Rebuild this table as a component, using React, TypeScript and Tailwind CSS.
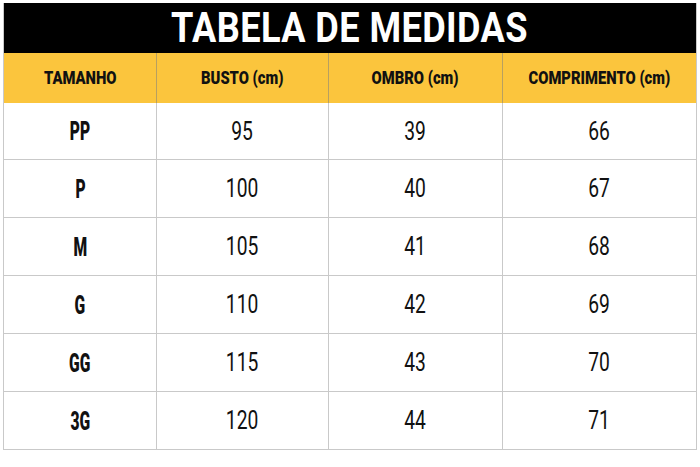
import React from "react";

const rows = [
  ["PP", "95", "39", "66"],
  ["P", "100", "40", "67"],
  ["M", "105", "41", "68"],
  ["G", "110", "42", "69"],
  ["GG", "115", "43", "70"],
  ["3G", "120", "44", "71"],
];

const headers = ["TAMANHO", "BUSTO (cm)", "OMBRO (cm)", "COMPRIMENTO (cm)"];

export default function App() {
  return (
    <div
      className="w-[700px] h-[467px] bg-white pt-[3px] pl-[3px]"
      style={{ fontFamily: "Roboto, 'DejaVu Sans', sans-serif" }}
    >
      <div className="w-[694px] border-x border-b border-[#c9c9c9]">
        <div className="h-[50px] bg-black flex items-center justify-center">
          <span className="inline-block text-white font-bold text-[42px] leading-none scale-x-[0.86] tracking-[0.5px]">
            TABELA DE MEDIDAS
          </span>
        </div>
        <div className="grid grid-cols-[152px_172px_174px_194px] h-[50px] bg-[#fbc53d]">
          {headers.map((h, i) => (
            <div
              key={h}
              className={`flex items-center justify-center ${i > 0 ? "border-l border-[#b8a060]" : ""}`}
            >
              <span className="inline-block font-black text-[18px] leading-none text-[#111] scale-x-[0.82]">
                {h}
              </span>
            </div>
          ))}
        </div>
        {rows.map((r, ri) => (
          <div
            key={r[0]}
            className={`grid grid-cols-[152px_172px_174px_194px] ${ri === 0 ? "h-[56px]" : "h-[58px]"} ${ri > 0 ? "border-t border-[#c9c9c9]" : ""}`}
          >
            {r.map((c, i) => (
              <div
                key={i}
                className={`flex items-center justify-center ${i > 0 ? "border-l border-[#c9c9c9]" : ""}`}
              >
                {i === 0 ? (
                  <span className="inline-block font-black text-[26px] leading-none text-[#111] scale-x-[0.6]">
                    {c}
                  </span>
                ) : (
                  <span className="inline-block font-normal text-[25px] leading-none text-[#111] scale-x-[0.77]">
                    {c}
                  </span>
                )}
              </div>
            ))}
          </div>
        ))}
      </div>
    </div>
  );
}
